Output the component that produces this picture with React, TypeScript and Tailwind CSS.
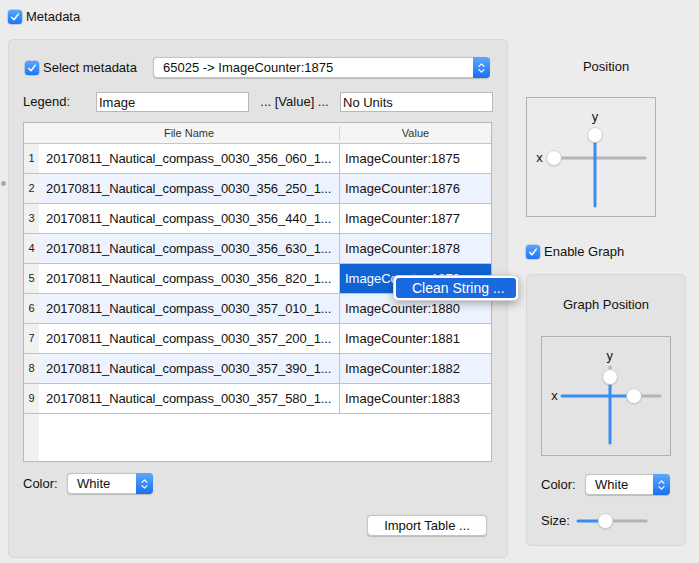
import { ReactNode } from "react";

const files = [
  ["356_060", "1875"],
  ["356_250", "1876"],
  ["356_440", "1877"],
  ["356_630", "1878"],
  ["356_820", "1879"],
  ["357_010", "1880"],
  ["357_200", "1881"],
  ["357_390", "1882"],
  ["357_580", "1883"],
];

function CheckBox() {
  return (
    <span className="flex h-[14px] w-[14px] shrink-0 items-center justify-center rounded-[3px] bg-linear-to-b from-[#55a7ff] to-[#1a76f4] shadow-[0_0_0_0.5px_rgba(0,60,160,0.35)]">
      <svg width="10" height="10" viewBox="0 0 10 10">
        <path d="M1.8 5.4 L4 7.8 L8.3 2.1" stroke="#fff" strokeWidth="1.5" fill="none" strokeLinecap="round" strokeLinejoin="round" />
      </svg>
    </span>
  );
}

function Popup({ label, className }: { label: string; className: string }) {
  return (
    <div className={`flex h-[21px] items-stretch rounded-[4px] border border-[#c4c4c4] bg-white shadow-[0_0.5px_1px_rgba(0,0,0,0.18)] ${className}`}>
      <span className="flex-1 truncate pl-[9px] leading-[19px]">{label}</span>
      <span className="-my-px -mr-px flex w-[17px] items-center justify-center rounded-r-[4px] bg-linear-to-b from-[#5aa8fc] to-[#1870f0]">
        <svg width="9" height="14" viewBox="0 0 9 14">
          <path d="M2 5.3 L4.5 2.8 L7 5.3 M2 8.7 L4.5 11.2 L7 8.7" stroke="#fff" strokeWidth="1.2" fill="none" strokeLinecap="round" strokeLinejoin="round" />
        </svg>
      </span>
    </div>
  );
}

function Knob({ cx, cy }: { cx: number; cy: number }) {
  return (
    <g>
      <circle cx={cx} cy={cy + 0.7} r={8} fill="rgba(0,0,0,0.13)" />
      <circle cx={cx} cy={cy} r={7.4} fill="#fff" stroke="#c8c8c8" strokeWidth={0.7} />
    </g>
  );
}

function Pad({ className, children }: { className: string; children: ReactNode }) {
  return (
    <div className={`h-[120px] w-[130px] border border-[#b0b0b0] ${className}`}>
      <svg width="128" height="118" viewBox="0 0 128 118" fontFamily="Liberation Sans, Arial, sans-serif" fontSize="13">
        {children}
      </svg>
    </div>
  );
}

export default function App() {
  return (
    <div className="relative flex h-[563px] w-[699px] overflow-hidden bg-[#ececec] font-['Liberation_Sans',Arial,sans-serif] text-[13px] text-[#111]">
      <span className="absolute left-[1px] top-[181px] h-[5px] w-[5px] rounded-full bg-[#aaaaaa]" />

      {/* left column */}
      <div className="flex w-[508px] flex-col pl-[8px] pt-[10px]">
        <div className="flex h-[14px] items-center gap-[4px]">
          <CheckBox />
          <span>Metadata</span>
        </div>

        <div className="mt-[15px] flex h-[519px] w-[500px] flex-col rounded-[5px] border border-[#d8d8d8] bg-[#e3e3e3] px-[14px] pt-[17px]">
          <div className="flex h-[21px] items-center">
            <span className="ml-[2px]"><CheckBox /></span>
            <span className="ml-[4px]">Select metadata</span>
            <Popup label="65025 -> ImageCounter:1875" className="ml-auto mr-[3px] w-[337px]" />
          </div>

          <div className="mt-[14px] flex h-[20px] items-center">
            <span className="w-[73px]">Legend:</span>
            <div className="h-[20px] w-[153px] border border-[#b8b8b8] bg-white pl-[2px] leading-[19px]">Image</div>
            <span className="w-[91px] text-center">... [Value] ...</span>
            <div className="h-[20px] w-[153px] border border-[#b8b8b8] bg-white pl-[2px] leading-[19px]">No Units</div>
          </div>

          <div className="mt-[10px] flex h-[340px] w-[469px] flex-col border border-[#b8b8b8] bg-white">
            <div className="flex h-[21px] shrink-0 border-b border-[#c6c6c6] bg-[#f5f5f5] text-[11px] text-[#333]">
              <span className="w-[15px]" />
              <span className="my-[3px] flex w-[301px] items-center justify-center border-r border-[#d6d6d6]">File Name</span>
              <span className="flex flex-1 items-center justify-center">Value</span>
            </div>
            {files.map(([f, v], i) => {
              const even = i % 2 === 1;
              const sel = i === 4;
              return (
                <div key={f} className={`flex h-[30px] shrink-0 border-b border-[#c2c2c2] ${even ? "bg-[#edf3fe]" : "bg-white"}`}>
                  <span className="flex w-[15px] items-center justify-center bg-[#f1f1f1] text-[11px] text-[#222]">{i + 1}</span>
                  <span className="flex w-[301px] items-center overflow-hidden whitespace-nowrap border-r border-[#c2c2c2] pl-[7px] tracking-[-0.1px]">
                    20170811_Nautical_compass_0030_{f}_1...
                  </span>
                  <span className={`flex flex-1 items-center pl-[5px] ${sel ? "bg-[#0f63d5] text-white" : ""}`}>ImageCounter:{v}</span>
                </div>
              );
            })}
            <div className="flex flex-1">
              <span className="w-[15px] bg-[#f1f1f1]" />
            </div>
          </div>

          <div className="mt-[11px] flex h-[21px] items-center">
            <span className="w-[44px]">Color:</span>
            <Popup label="White" className="w-[86px]" />
          </div>

          <button className="mr-[6px] mt-[21px] h-[21px] w-[120px] self-end rounded-[4px] border border-[#c4c4c4] bg-white text-[13px] shadow-[0_0.5px_1px_rgba(0,0,0,0.18)]">
            Import Table ...
          </button>
        </div>
      </div>

      {/* right column */}
      <div className="flex w-[191px] flex-col pl-[18px] pt-[59px]">
        <div className="w-[160px] text-center leading-[16px]">Position</div>
        <Pad className="mt-[22px] bg-[#ececec]">
          <text x="68" y="23" textAnchor="middle" fill="#111">y</text>
          <text x="12.5" y="64" textAnchor="middle" fill="#111">x</text>
          <line x1="26" y1="60" x2="118" y2="60" stroke="#b4b4b4" strokeWidth="3" strokeLinecap="round" />
          <line x1="68" y1="42" x2="68" y2="108" stroke="#3a8cf5" strokeWidth="3" strokeLinecap="round" />
          <Knob cx={68} cy={37} />
          <Knob cx={27} cy={60} />
        </Pad>

        <div className="mt-[28px] flex h-[14px] items-center gap-[4px]">
          <CheckBox />
          <span>Enable Graph</span>
        </div>

        <div className="mt-[15px] flex h-[272px] w-[160px] flex-col rounded-[5px] border border-[#d8d8d8] bg-[#e3e3e3] pl-[14px] pt-[22px]">
          <div className="w-[130px] text-center leading-[16px]">Graph Position</div>
          <Pad className="mt-[23px] h-[119px]">
            <text x="67.7" y="22.5" textAnchor="middle" fill="#111">y</text>
            <text x="12.5" y="63" textAnchor="middle" fill="#111">x</text>
            <line x1="92" y1="59" x2="118" y2="59" stroke="#b4b4b4" strokeWidth="3" strokeLinecap="round" />
            <line x1="20" y1="59" x2="92" y2="59" stroke="#3a8cf5" strokeWidth="3" strokeLinecap="round" />
            <line x1="68" y1="30" x2="68" y2="40" stroke="#b4b4b4" strokeWidth="3" strokeLinecap="round" />
            <line x1="68" y1="40" x2="68" y2="106" stroke="#3a8cf5" strokeWidth="3" strokeLinecap="round" />
            <Knob cx={68} cy={40} />
            <Knob cx={92} cy={59} />
          </Pad>

          <div className="mt-[18px] flex h-[21px] items-center">
            <span className="w-[44px]">Color:</span>
            <Popup label="White" className="w-[85px]" />
          </div>

          <div className="mt-[17px] flex h-[18px] items-center">
            <span className="w-[35px]">Size:</span>
            <svg width="72" height="18" viewBox="0 0 72 18">
              <line x1="30" y1="9" x2="70" y2="9" stroke="#b4b4b4" strokeWidth="3" strokeLinecap="round" />
              <line x1="2" y1="9" x2="30" y2="9" stroke="#3a8cf5" strokeWidth="3" strokeLinecap="round" />
              <Knob cx={29.5} cy={9} />
            </svg>
          </div>
        </div>
      </div>

      {/* context menu */}
      <div className="absolute left-[393px] top-[275px] h-[26px] w-[126px] rounded-[5px] border border-[#d4d4d4] bg-white p-[2px] shadow-[0_3px_9px_rgba(0,0,0,0.3)]">
        <div className="h-[20px] rounded-[3px] bg-[#1a69df] pl-[16px] text-[14px] leading-[20px] text-white">Clean String ...</div>
      </div>
    </div>
  );
}
